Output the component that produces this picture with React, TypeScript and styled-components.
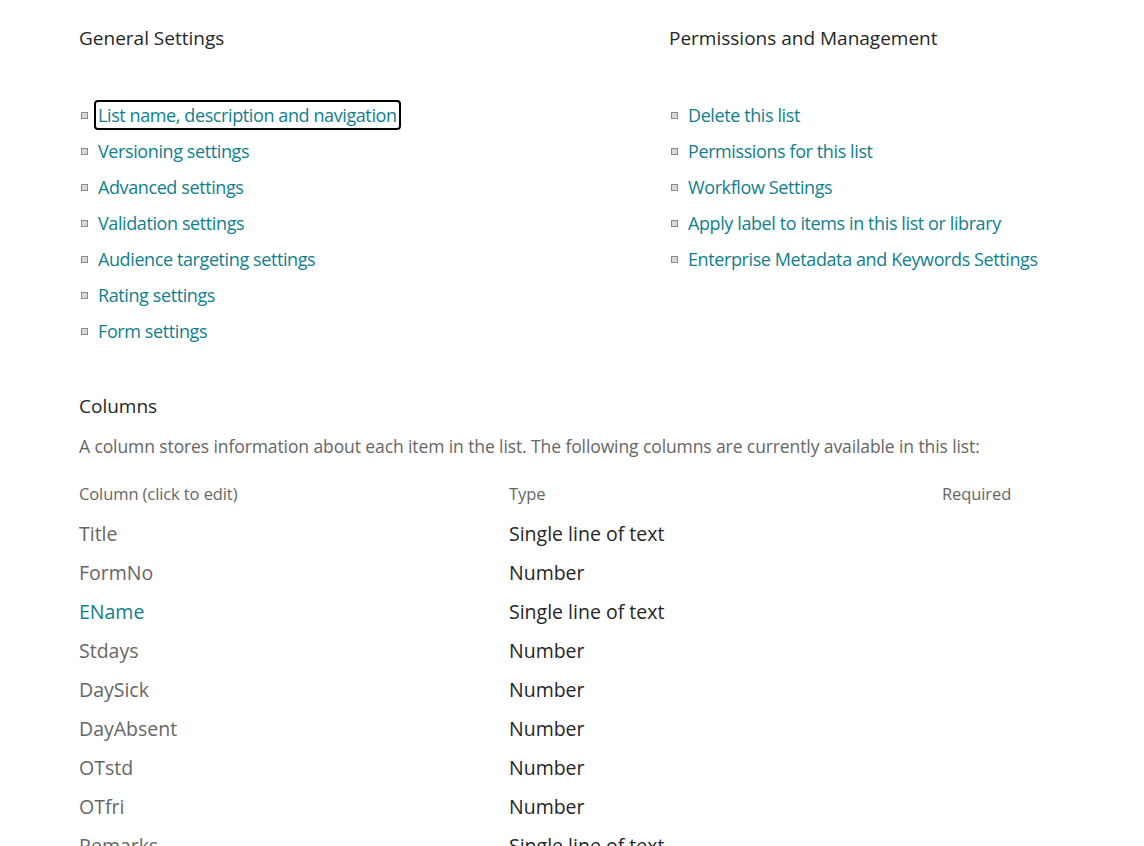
import { Fragment } from 'react';
import styled, { createGlobalStyle } from 'styled-components';

const GlobalStyle = createGlobalStyle`
  html, body {
    margin: 0;
    padding: 0;
    background: #fff;
  }
  body {
    font-family: "Open Sans", "Noto Sans", sans-serif;
    color: #333;
  }
`;

const Page = styled.div`
  padding: 24px 0 0 79px;
  width: 1065px;
  height: 846px;
  box-sizing: border-box;
  overflow: hidden;
`;

const SettingsGrid = styled.div`
  display: grid;
  grid-template-columns: 590px 1fr;
`;

const Section = styled.section`
  display: flex;
  flex-direction: column;
`;

const Heading = styled.h2`
  margin: 0;
  font-size: 19px;
  font-weight: 400;
  line-height: 28px;
  color: #262626;
`;

const LinkList = styled.ul`
  list-style: none;
  margin: 50px 0 0;
  padding: 0;
  display: flex;
  flex-direction: column;
  gap: 10px;
`;

const Item = styled.li`
  display: flex;
  align-items: center;
  height: 26px;
`;

const Bullet = styled.span`
  width: 5px;
  height: 5px;
  border: 1px solid #8a8a8a;
  background: #d8d8d8;
  margin: 0 10px 0 2px;
  flex-shrink: 0;
`;

const SettingLink = styled.a<{ $focused?: boolean }>`
  color: #0f7f8f;
  text-decoration: none;
  font-size: 18px;
  letter-spacing: -0.4px;
  line-height: 26px;
  padding: 0 2px;
  margin-left: -4px;
  border: 2px solid ${(p) => (p.$focused ? '#000' : 'transparent')};
  border-radius: 4px;
`;

const ColumnsSection = styled.section`
  margin-top: 48px;
`;

const Description = styled.p`
  margin: 14px 0 0;
  font-size: 17.5px;
  color: #666;
  letter-spacing: -0.1px;
  line-height: 24px;
`;

const Table = styled.div`
  margin-top: 25px;
  display: grid;
  grid-template-columns: 430px 433px auto;
`;

const HeadCell = styled.div`
  font-size: 16.5px;
  color: #666;
  line-height: 22px;
  letter-spacing: -0.1px;
  padding-bottom: 9px;
`;

const Cell = styled.div<{ $kind?: 'name' | 'link' | 'type' }>`
  font-size: 19.5px;
  line-height: 39px;
  color: ${(p) => (p.$kind === 'link' ? '#0f7f8f' : p.$kind === 'type' ? '#262626' : '#666')};
  white-space: nowrap;
`;

const general = [
  'List name, description and navigation',
  'Versioning settings',
  'Advanced settings',
  'Validation settings',
  'Audience targeting settings',
  'Rating settings',
  'Form settings',
];

const permissions = [
  'Delete this list',
  'Permissions for this list',
  'Workflow Settings',
  'Apply label to items in this list or library',
  'Enterprise Metadata and Keywords Settings',
];

const columns = [
  { name: 'Title', type: 'Single line of text' },
  { name: 'FormNo', type: 'Number' },
  { name: 'EName', type: 'Single line of text', link: true },
  { name: 'Stdays', type: 'Number' },
  { name: 'DaySick', type: 'Number' },
  { name: 'DayAbsent', type: 'Number' },
  { name: 'OTstd', type: 'Number' },
  { name: 'OTfri', type: 'Number' },
  { name: 'Remarks', type: 'Single line of text' },
];

export default function App() {
  return (
    <Page>
      <GlobalStyle />
      <SettingsGrid>
        <Section>
          <Heading>General Settings</Heading>
          <LinkList>
            {general.map((label, i) => (
              <Item key={label}>
                <Bullet />
                <SettingLink href="#" $focused={i === 0}>
                  {label}
                </SettingLink>
              </Item>
            ))}
          </LinkList>
        </Section>
        <Section>
          <Heading>Permissions and Management</Heading>
          <LinkList>
            {permissions.map((label) => (
              <Item key={label}>
                <Bullet />
                <SettingLink href="#">{label}</SettingLink>
              </Item>
            ))}
          </LinkList>
        </Section>
      </SettingsGrid>

      <ColumnsSection>
        <Heading>Columns</Heading>
        <Description>
          A column stores information about each item in the list. The following columns are currently
          available in this list:
        </Description>
        <Table>
          <HeadCell>Column (click to edit)</HeadCell>
          <HeadCell>Type</HeadCell>
          <HeadCell>Required</HeadCell>
          {columns.map((c) => (
            <Fragment key={c.name}>
              <Cell $kind={c.link ? 'link' : 'name'}>{c.name}</Cell>
              <Cell $kind="type">{c.type}</Cell>
              <Cell />
            </Fragment>
          ))}
        </Table>
      </ColumnsSection>
    </Page>
  );
}
